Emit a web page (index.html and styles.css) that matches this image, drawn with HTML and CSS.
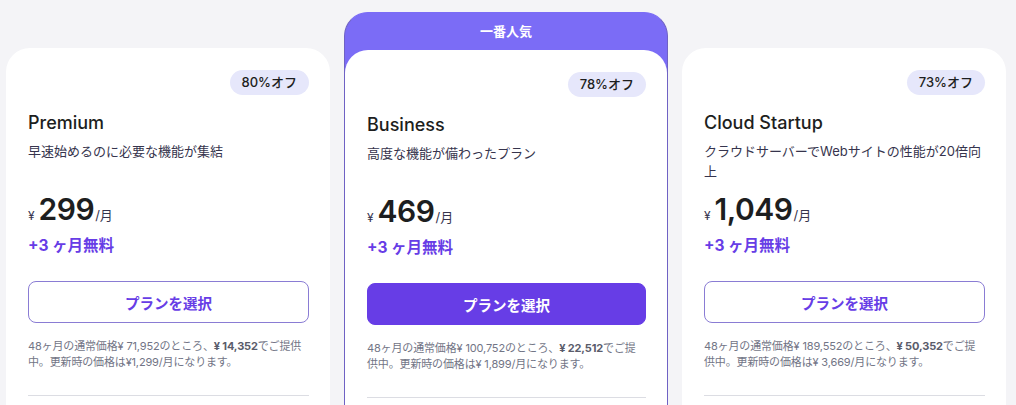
FILE: index.html
```html
<!DOCTYPE html>
<html lang="ja">
<head>
<meta charset="utf-8">
<title>プラン</title>
<link rel="stylesheet" href="styles.css">
</head>
<body>
<main class="plans">
  <section class="card">
    <div class="card-body">
      <div class="badge-row"><span class="badge">80%オフ</span></div>
      <h2 class="plan-name">Premium</h2>
      <p class="plan-desc">早速始めるのに必要な機能が集結</p>
      <div class="price"><span class="currency">¥</span><span class="amount">299</span><span class="per">/月</span></div>
      <div class="bonus">+3 ヶ月無料</div>
      <button class="btn btn--outline">プランを選択</button>
      <p class="note">48ヶ月の通常価格¥ 71,952のところ、<b>¥ 14,352</b>でご提供中。更新時の価格は¥1,299/月になります。</p>
      <hr class="divider">
    </div>
  </section>
  <section class="card card--featured">
    <div class="featured-label">一番人気</div>
    <div class="card-body">
      <div class="badge-row"><span class="badge">78%オフ</span></div>
      <h2 class="plan-name">Business</h2>
      <p class="plan-desc">高度な機能が備わったプラン</p>
      <div class="price"><span class="currency">¥</span><span class="amount">469</span><span class="per">/月</span></div>
      <div class="bonus">+3 ヶ月無料</div>
      <button class="btn btn--filled">プランを選択</button>
      <p class="note">48ヶ月の通常価格¥ 100,752のところ、<b>¥ 22,512</b>でご提供中。更新時の価格は¥ 1,899/月になります。</p>
      <hr class="divider">
    </div>
  </section>
  <section class="card">
    <div class="card-body">
      <div class="badge-row"><span class="badge">73%オフ</span></div>
      <h2 class="plan-name">Cloud Startup</h2>
      <p class="plan-desc">クラウドサーバーでWebサイトの性能が20倍向上</p>
      <div class="price"><span class="currency">¥</span><span class="amount">1,049</span><span class="per">/月</span></div>
      <div class="bonus">+3 ヶ月無料</div>
      <button class="btn btn--outline">プランを選択</button>
      <p class="note">48ヶ月の通常価格¥ 189,552のところ、<b>¥ 50,352</b>でご提供中。更新時の価格は¥ 3,669/月になります。</p>
      <hr class="divider">
    </div>
  </section>
</main>
</body>
</html>
```

FILE: styles.css
```css
* { box-sizing: border-box; }

html, body {
  margin: 0;
  padding: 0;
  height: 405px;
  overflow: hidden;
}

body {
  background: #f4f4f7;
  font-family: Inter, "Noto Sans CJK JP", sans-serif;
  color: #1d1e20;
}

.plans {
  display: flex;
  align-items: flex-start;
  gap: 14px;
  padding: 12px 10px 0 6px;
}

.card {
  flex: 0 0 324px;
  margin-top: 36px;
  background: #ffffff;
  border-radius: 24px;
}

.card-body {
  padding: 22px 21px 60px 22px;
}

.card--featured {
  margin-top: 0;
  background: #7b6cf6;
  border: 1px solid #6f62c4;
  border-top-color: #7b6cf6;
}

.featured-label {
  height: 37px;
  line-height: 37px;
  text-align: center;
  color: #ffffff;
  font-size: 13px;
  font-weight: 700;
}

.card--featured .card-body {
  background: #ffffff;
  border-radius: 23px 23px 0 0;
}

.badge-row {
  display: flex;
  justify-content: flex-end;
}

.badge {
  height: 25px;
  line-height: 25px;
  padding: 0 12px;
  border-radius: 13px;
  background: #e6e7fb;
  font-size: 13px;
  font-weight: 500;
  color: #1d1e20;
}

.plan-name {
  margin: 16px 0 0;
  font-size: 18px;
  line-height: 24px;
  font-weight: 500;
  color: #1d1e20;
}

.plan-desc {
  margin: 6px 0 0;
  min-height: 40px;
  font-size: 13px;
  line-height: 20px;
  color: #36344d;
}

.price {
  margin-top: 10px;
  display: flex;
  align-items: baseline;
  height: 36px;
}

.currency {
  font-size: 12px;
  margin-right: 4px;
  color: #36344d;
}

.amount {
  font-size: 30px;
  line-height: 36px;
  font-weight: 600;
  letter-spacing: -0.5px;
  color: #1d1e20;
}

.per {
  font-size: 13px;
  color: #36344d;
  margin-left: 1px;
}

.bonus {
  margin-top: 8px;
  font-size: 15.5px;
  line-height: 22px;
  font-weight: 700;
  color: #673de6;
}

.btn {
  display: block;
  width: 100%;
  height: 42px;
  margin-top: 24px;
  border-radius: 8px;
  font-family: inherit;
  font-size: 14.5px;
  font-weight: 700;
  cursor: pointer;
}

.btn--outline {
  background: #ffffff;
  border: 1px solid #8a7cd4;
  color: #673de6;
}

.btn--filled {
  background: #673de6;
  border: 1px solid #673de6;
  color: #ffffff;
}

.note {
  margin: 15px 0 0;
  font-size: 11px;
  line-height: 16px;
  letter-spacing: -0.15px;
  color: #727586;
}

.note b {
  font-weight: 700;
  color: #5a5c6b;
}

.divider {
  margin: 25px 0 0;
  border: 0;
  border-top: 1px solid #dcdde3;
}
```
